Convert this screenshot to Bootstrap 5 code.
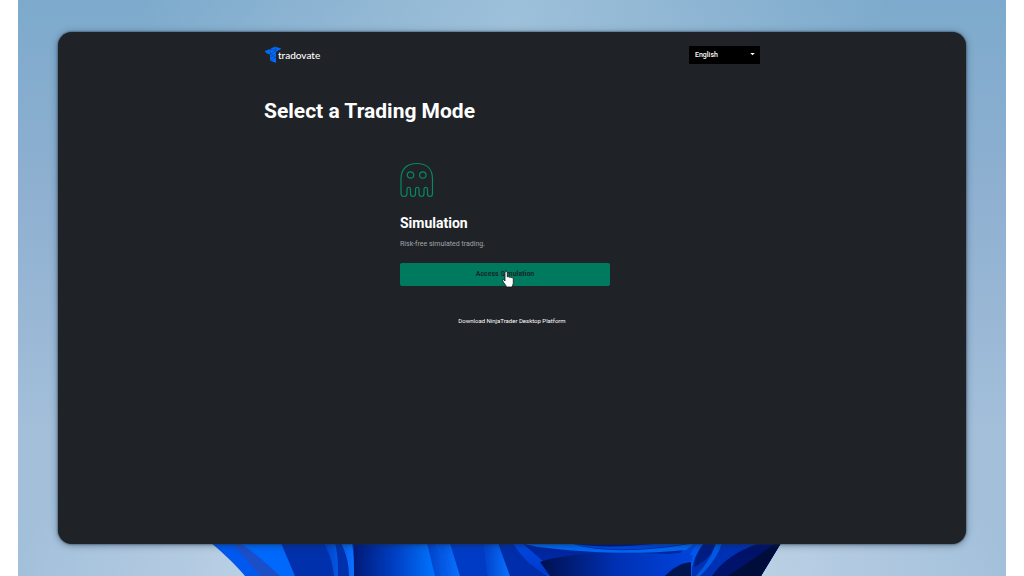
<!DOCTYPE html>
<html lang="en">
<head>
<meta charset="utf-8">
<meta name="viewport" content="width=device-width, initial-scale=1">
<title>Select a Trading Mode</title>
<link href="https://cdn.jsdelivr.net/npm/bootstrap@5.3.0/dist/css/bootstrap.min.css" rel="stylesheet">
<style>
  body { background: #fff; font-family: Roboto, "Liberation Sans", sans-serif; }
  .desktop {
    background:
      radial-gradient(ellipse 50% 34% at 50% 100%, #d2e0ee, transparent),
      linear-gradient(100deg, transparent 12%, rgba(205, 225, 238, .4) 48%, transparent 84%) top / 100% 50% no-repeat,
      linear-gradient(#7daacc, #8fb0d1 34%, #a3bfda 75%, #a3c0db);
    margin: 0 18px;
    padding-top: 32px;
  }
  .screen {
    background: #1f2327;
    border-radius: 14px;
    box-shadow: 0 0 2px #1f2f3c, 0 1px 7px rgba(20, 40, 60, .5);
    margin: 0 40px;
    z-index: 1;
  }
  .page { max-width: 496px; padding-top: 13px; }
  .logo-mark { width: 19px; height: 18px; }
  .logo-word { font: 500 10px/18px Lato, "Noto Sans", sans-serif; color: #fff; margin: 1px 0 0 -5px; }
  .language {
    width: 71px; height: 18px; padding: 0 6px; border: 0; border-radius: 0;
    background: #000 url("data:image/svg+xml,%3Csvg xmlns='http://www.w3.org/2000/svg' viewBox='0 0 6 4'%3E%3Cpath fill='white' d='M0 0h6L3 3z'/%3E%3C/svg%3E") no-repeat right 5px center / 5px 3px;
    color: #fff; font-size: 7px; font-weight: 500; line-height: 18px;
  }
  .page-title { font-size: 21px; line-height: 28px; font-weight: 700; margin: 33px 0 37px; }
  .mode { width: 224px; padding-right: 14px; }
  .ghost { width: 34px; height: 36px; }
  .mode-name { font-size: 14px; line-height: 20px; font-weight: 700; margin: 15px 0 0; }
  .mode-text { font-size: 7px; line-height: 10px; color: #a1a4a7; margin: 6px 0 14px; }
  .access {
    --bs-btn-bg: #007a5e; --bs-btn-color: #15282a;
    --bs-btn-hover-bg: #008566; --bs-btn-hover-color: #15282a;
    --bs-btn-active-bg: #006d54; --bs-btn-active-color: #15282a;
    --bs-btn-padding-y: 0; --bs-btn-border-width: 0; --bs-btn-border-radius: 2px;
    --bs-btn-font-size: 7px; --bs-btn-font-weight: 700; --bs-btn-line-height: 23px;
  }
  .pointer { width: 12px; height: 17px; left: 102px; top: 8px; pointer-events: none; }
  .download { font-size: 6px; line-height: 10px; margin-top: 30px; }
  .bloom { height: 32px; }
</style>
</head>
<body>
<div class="desktop min-vh-100 d-flex flex-column">
  <div class="screen position-relative flex-grow-1 text-white">
    <div class="page mx-auto">
      <header class="d-flex justify-content-between align-items-center">
        <a href="#" class="d-flex align-items-center text-decoration-none" aria-label="tradovate">
          <svg class="logo-mark" viewBox="0 0 19 18" aria-hidden="true">
            <path fill="#006bff" d="M.5 5.300 6 3 11 .5l6.500 2.200-4.500 2.500-1 .8v11L6 14.500V8.500L3 7.500z"/>
            <path fill="none" stroke="#1f2327" stroke-width=".35" d="m6 3 .5 5L12 4.500 11 .5M6 3l6 1.500M6 11.500l6-4M6 8l6 4M6 14.500l6-3.500"/>
          </svg>
          <span class="logo-word">tradovate</span>
        </a>
        <select class="form-select language" aria-label="Language"><option>English</option></select>
      </header>
      <main>
        <h1 class="page-title">Select a Trading Mode</h1>
        <section class="mode mx-auto">
          <svg class="ghost d-block" viewBox="0 0 34 36" fill="none" stroke="#078765" stroke-width="1.2" aria-hidden="true">
            <path d="M1 17C1 7 7 1.500 16.800 1.500S32.500 7 32.500 17v14.500c0 4-5 4-5 0v-4c0-3-3.500-3-3.500 0v4c0 4-5 4-5 0v-4c0-3-3.500-3-3.500 0v4c0 4-5 4-5 0v-4c0-3-3.500-3-3.500 0v4c0 4-6 4-6 0z"/>
            <circle cx="10.500" cy="13" r="3.200"/><circle cx="22.800" cy="13" r="3.200"/>
          </svg>
          <h2 class="mode-name">Simulation</h2>
          <p class="mode-text">Risk-free simulated trading.</p>
          <div class="position-relative">
            <button type="button" class="btn access w-100 d-block">Access Simulation</button>
            <svg class="pointer position-absolute" viewBox="0 0 12 17" aria-hidden="true">
              <path fill="#fff" stroke="#111" stroke-width=".8" d="M3 10V2c0-2 2.300-2 2.300 0v4c.4-.7 1.700-.5 1.900.4.500-.7 1.700-.4 1.900.4.700-.6 2.200-.2 2.200 1.200v3.500c0 2-.8 3-1.300 4.500H4.500C4 14 1.500 12 .7 9.800.3 8.500 1.700 8 3 10z"/>
            </svg>
          </div>
        </section>
        <p class="download text-center mb-0"><a href="#" class="text-white text-decoration-none">Download NinjaTrader Desktop Platform</a></p>
      </main>
    </div>
  </div>
  <svg class="bloom w-100 d-block flex-shrink-0" viewBox="18 544 988 32" preserveAspectRatio="xMidYMid slice" aria-hidden="true">
    <defs>
      <linearGradient id="fold"><stop stop-color="#001a78"/><stop offset=".5" stop-color="#003fc4"/><stop offset="1" stop-color="#0074ff"/></linearGradient>
      <linearGradient id="petal" x1="0" y1="0" x2="0" y2="1"><stop stop-color="#0049e0"/><stop offset="1" stop-color="#0038cc"/></linearGradient>
      <linearGradient id="edge"><stop stop-color="#0040c8"/><stop offset="1" stop-color="#0a72ff"/></linearGradient>
      <linearGradient id="shade"><stop stop-color="#00104e"/><stop offset=".5" stop-color="#0030b4"/><stop offset="1" stop-color="#0044dc"/></linearGradient>
    </defs>
    <path fill="#0058ee" d="M211 543h570l-20 33H245C233 562 222 552 211 543z"/>
    <path fill="#1b4fc8" d="M232 543h10l38 33h-20z"/>
    <path fill="#0068fa" d="M239 543h43l13 33h-15C265 562 253 551 239 543z"/>
    <path fill="#0030ac" d="M281 543h73v33h-59z"/>
    <path fill="url(#edge)" d="M324 543h11c3 12 3 22 3 33h-4c-1-12-5-23-10-33zM341 543h11c2 12 2 22 2 33h-5c0-12-3-23-8-33z"/>
    <path fill="url(#fold)" d="M354 543h74l7 33h-81z"/>
    <path fill="url(#edge)" d="M427 543h9l11 33h-12zM437 543h5l11 33h-5zM443 543h7l10 33h-7z"/>
    <path fill="#003bc6" d="M450 543h34l4 33h-28z"/>
    <path fill="url(#edge)" d="M483 543h16l11 33h-22z"/>
    <path fill="#002eaa" d="M498 543h17c8 14 19 25 33 33h-38z"/>
    <path fill="url(#petal)" d="M513 543h184l-20 33H550c-18-8-29-19-37-33z"/>
    <path fill="#0026a0" d="M522 543h48c25 8 70 9 120 0l-10 10c-55 5-105-3-137 8z"/>
    <path fill="#0069f5" d="M520 543h50c28 10 75 9 125 0l-9 7c-52 5-97 3-148-3z"/>
    <path fill="#001573" d="M568 543h95c-35 4-68 5-95 0z"/>
    <path fill="url(#shade)" d="M540 562c28-11 90-10 153-7l-1 6c-16 3-30 8-45 15h-97z"/>
    <path fill="#001452" d="M665 576c8-8 16-13 26-14v14z"/>
    <path fill="#0031b4" d="M692 576c-1-18 8-26 12-33h77l-20 33z"/>
    <path fill="#001d83" d="M704 543h12c-3 10-9 18-22 24 1-10 5-18 10-24z"/>
    <path fill="#0059e2" d="M716 543h6c-5 15-13 24-22 33h-4c9-10 16-20 20-33z"/>
    <path fill="#001269" d="M712 576c11-16 27-26 48-33h21l-20 33z"/>
    <path fill="#000d3b" d="M728 576c15-10 35-23 47-33h6l-20 33z"/>
  </svg>
</div>
<script src="https://cdn.jsdelivr.net/npm/bootstrap@5.3.0/dist/js/bootstrap.bundle.min.js"></script>
</body>
</html>
